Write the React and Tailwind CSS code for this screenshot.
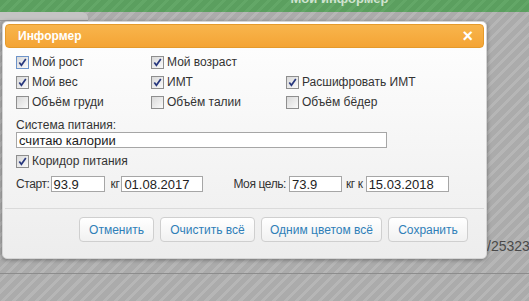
import React from "react";

const font = { fontFamily: '"Liberation Sans", Arial, sans-serif' };

function Box({ checked, focus }) {
    return (
        <span
            className={`inline-flex w-[13px] h-[13px] shrink-0 items-center justify-center border bg-linear-to-br from-[#d9d9d9] to-[#fafafa] ${
                focus ? "border-[#6d93c9]" : "border-[#8e8e8e]"
            }`}
        >
            {checked && (
                <svg width="9" height="9" viewBox="0 0 9 9">
                    <path d="M1.3 4.6 L3.4 7.3 L7.8 1" stroke="#28387e" strokeWidth="1.7" fill="none" />
                </svg>
            )}
        </span>
    );
}

function Check({ label, checked, focus }) {
    return (
        <label className="flex items-center gap-[3px] h-[20px] whitespace-nowrap">
            <Box checked={checked} focus={focus} />
            <span>{label}</span>
        </label>
    );
}

function Field({ value, w, className = "" }) {
    return (
        <div className={`${w} ${className} shrink-0 h-[16px] border border-[#a6a6a6] bg-white px-[2px] flex items-center text-[13px] tracking-normal leading-none text-[#222] whitespace-nowrap`}>
            {value}
        </div>
    );
}

function Btn({ children, w }) {
    return (
        <button className={`${w} h-[25px] rounded-[4px] border border-[#cfcfcf] bg-linear-to-b from-white to-[#f1f1f1] text-[12px] text-[#2f7fb8] whitespace-nowrap`}>
            {children}
        </button>
    );
}

export default function App() {
    return (
        <div
            style={font}
            className="relative w-[529px] h-[301px] overflow-hidden bg-[repeating-linear-gradient(135deg,#ababab_0px,#ababab_5px,#b6b6b6_5px,#b6b6b6_8px)]"
        >
            {/* top green bar */}
            <div className="h-[12px] overflow-hidden bg-[repeating-linear-gradient(135deg,#5b9f5f_0px,#5b9f5f_5px,#63a767_5px,#63a767_8px)] flex justify-center">
                <span className="-mt-[11px] ml-[150px] text-[13px] font-bold text-[#cfe3cf]">Мой информер</span>
            </div>
            <div className="w-[88px] h-[9px] bg-[#c4c4c4] rounded-tr-[6px] border-b border-[#9a9a9a]" />

            {/* page content behind */}
            <div className="absolute left-0 top-[273px] w-full h-px bg-[#8c8c8c]" />
            <div className="absolute left-[487px] top-[236px] text-[14px] text-[#4a4a4a] whitespace-nowrap">/25323</div>

            {/* dialog */}
            <div className="absolute left-[2px] top-[21px] w-[485px] h-[238px] rounded-[5px] border border-[#d4d4d4] bg-linear-to-b from-white to-[#ededed] shadow-[0_1px_4px_rgba(0,0,0,0.35)] p-[2px] flex flex-col text-[12px] text-[#333]">
                <div className="h-[24px] rounded-[4px] border border-[#e49a2c] bg-linear-to-b from-[#f8b54c] to-[#f4a434] flex items-center justify-between pl-[12px] pr-[10px]">
                    <span className="text-[12px] font-bold text-white">Информер</span>
                    <span className="text-[18px] font-bold text-white leading-none">×</span>
                </div>

                <div className="px-[11px] pt-[4px]">
                    <div className="grid grid-cols-[135px_135px_135px] leading-none">
                        <Check label="Мой рост" checked focus />
                        <Check label="Мой возраст" checked />
                        <div />
                        <Check label="Мой вес" checked />
                        <Check label="ИМТ" checked />
                        <Check label="Расшифровать ИМТ" checked />
                        <Check label="Объём груди" />
                        <Check label="Объём талии" />
                        <Check label="Объём бёдер" />
                    </div>

                    <div className="mt-[7px] leading-none">Система питания:</div>
                    <div className="mt-[1px]">
                        <Field value="считаю калории" w="w-[371px]" />
                    </div>

                    <div className="mt-[3px] leading-none">
                        <Check label="Коридор питания" checked />
                    </div>

                    <div className="mt-[5px] flex items-center leading-none whitespace-nowrap text-[12px] tracking-[-0.4px]">
                        <span>Старт:</span>
                        <Field value="93.9" w="w-[54px]" className="ml-[1px]" />
                        <span className="ml-[6px]">кг</span>
                        <Field value="01.08.2017" w="w-[82px]" className="ml-[2px]" />
                        <span className="ml-[30px]">Моя цель:</span>
                        <Field value="73.9" w="w-[53px]" className="ml-[3px]" />
                        <span className="ml-[4px]">кг к</span>
                        <Field value="15.03.2018" w="w-[83px]" className="ml-[3px]" />
                    </div>
                </div>

                <div className="mt-auto border-t border-[#dadada] h-[48px] flex items-start justify-end gap-[6px] pt-[8px] pr-[16px]">
                    <Btn w="w-[75px]">Отменить</Btn>
                    <Btn w="w-[95px]">Очистить всё</Btn>
                    <Btn w="w-[121px]">Одним цветом всё</Btn>
                    <Btn w="w-[80px]">Сохранить</Btn>
                </div>
            </div>
        </div>
    );
}
